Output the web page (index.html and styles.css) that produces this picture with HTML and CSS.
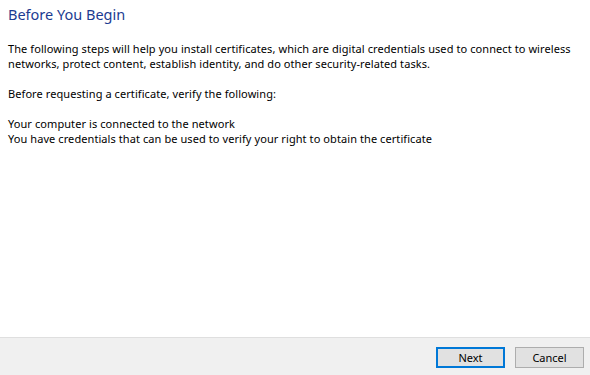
FILE: index.html
```html
<!DOCTYPE html>
<html lang="en">
  <head>
    <meta charset="UTF-8" />
    <title>Certificate Enrollment</title>
    <link rel="stylesheet" href="styles.css">
  </head>
  <body>
    <div class="wizard">
      <main class="page">
        <h1 class="title">Before You Begin</h1>
        <p class="text">
          The following steps will help you install certificates, which are digital credentials used to connect to wireless
          networks, protect content, establish identity, and do other security-related tasks.
        </p>
        <p class="text">Before requesting a certificate, verify the following:</p>
        <ul class="checks">
          <li>Your computer is connected to the network</li>
          <li>You have credentials that can be used to verify your right to obtain the certificate</li>
        </ul>
      </main>
      <footer class="actions">
        <button class="btn btn-default" type="button">Next</button>
        <button class="btn" type="button">Cancel</button>
      </footer>
    </div>
  </body>
</html>
```

FILE: styles.css
```css
* {
  box-sizing: border-box;
  margin: 0;
  padding: 0;
}

html,
body {
  width: 590px;
  height: 375px;
  background: #fff;
  font-family: "Noto Sans", "Open Sans", sans-serif;
  font-size: 11px;
  letter-spacing: 0.08px;
  color: #000;
  overflow: hidden;
}

.wizard {
  display: flex;
  flex-direction: column;
  height: 375px;
}

/* Content area */
.page {
  flex: 1;
  padding: 4px 8px 0 8px;
}

.title {
  font-size: 14.5px;
  font-weight: normal;
  letter-spacing: 0;
  color: #1c3b91;
  line-height: 20px;
  margin-bottom: 17px;
}

.text {
  line-height: 15px;
  margin-bottom: 15px;
  max-width: 578px;
}

.checks {
  list-style: none;
  line-height: 15px;
}

/* Bottom button bar */
.actions {
  height: 38px;
  background: #f0f0f0;
  border-top: 1px solid #dfdfdf;
  display: flex;
  justify-content: flex-end;
  align-items: flex-start;
  gap: 10px;
  padding: 9px 6px 0 0;
}

.btn {
  width: 69px;
  height: 21px;
  background: #e1e1e1;
  border: 1px solid #adadad;
  font-family: inherit;
  font-size: 11px;
  color: #000;
}

.btn-default {
  border: 2px solid #0078d7;
}
```
